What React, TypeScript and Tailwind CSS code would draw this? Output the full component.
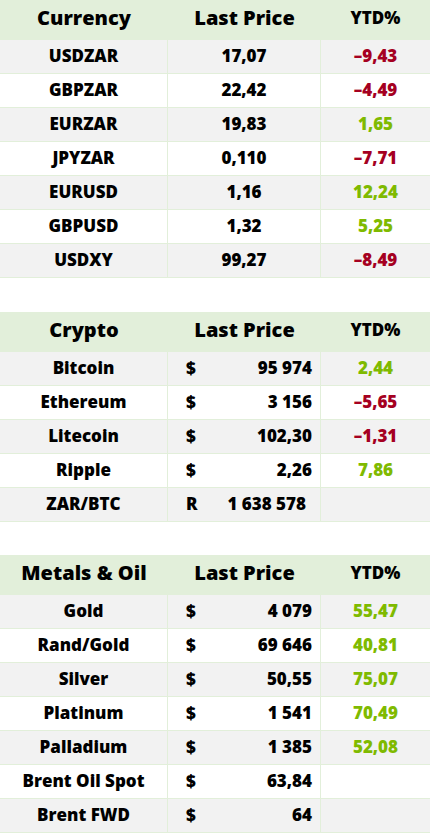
import * as React from 'react'

type Row = {
  name: string
  price: string
  cur?: string
  ytd?: string
  narrow?: boolean
}

const currency: Row[] = [
  { name: 'USDZAR', price: '17,07', ytd: '-9,43' },
  { name: 'GBPZAR', price: '22,42', ytd: '-4,49' },
  { name: 'EURZAR', price: '19,83', ytd: '1,65' },
  { name: 'JPYZAR', price: '0,110', ytd: '-7,71' },
  { name: 'EURUSD', price: '1,16', ytd: '12,24' },
  { name: 'GBPUSD', price: '1,32', ytd: '5,25' },
  { name: 'USDXY', price: '99,27', ytd: '-8,49' }
]

const crypto: Row[] = [
  { name: 'Bitcoin', cur: '$', price: '95 974', ytd: '2,44' },
  { name: 'Ethereum', cur: '$', price: '3 156', ytd: '-5,65' },
  { name: 'Litecoin', cur: '$', price: '102,30', ytd: '-1,31' },
  { name: 'Ripple', cur: '$', price: '2,26', ytd: '7,86' },
  { name: 'ZAR/BTC', cur: 'R', price: '1 638 578', narrow: true }
]

const metals: Row[] = [
  { name: 'Gold', cur: '$', price: '4 079', ytd: '55,47' },
  { name: 'Rand/Gold', cur: '$', price: '69 646', ytd: '40,81' },
  { name: 'Silver', cur: '$', price: '50,55', ytd: '75,07' },
  { name: 'Platinum', cur: '$', price: '1 541', ytd: '70,49' },
  { name: 'Palladium', cur: '$', price: '1 385', ytd: '52,08' },
  { name: 'Brent Oil Spot', cur: '$', price: '63,84' },
  { name: 'Brent FWD', cur: '$', price: '64' }
]

function Table(props: { title: string; rows: Row[] }) {
  const { title, rows } = props
  return (
    <div className="w-[430px]">
      <div className="grid grid-cols-[168px_153px_109px] h-10 bg-[#e2efda] items-center text-black pb-1">
        <div className="text-center text-[20px]">{title}</div>
        <div className="text-center text-[20px]">Last Price</div>
        <div className="text-center text-[17px]">YTD%</div>
      </div>
      {rows.map((r, i) => (
        <div
          key={r.name}
          className={`grid grid-cols-[168px_153px_109px] h-[34px] text-[17px] border-b border-[#e2efda] ${
            i % 2 === 0 ? 'bg-[#f2f2f2]' : 'bg-white'
          }`}
        >
          <div className="flex items-center justify-center border-r border-[#e2efda] pb-0.5">{r.name}</div>
          {r.cur ? (
            <div className="flex items-center justify-between border-r border-[#e2efda] pl-[18px] pr-[8px] pb-0.5">
              <span>{r.cur}</span>
              <span className={r.narrow ? 'pr-[6px]' : ''}>{r.price}</span>
            </div>
          ) : (
            <div className="flex items-center justify-center border-r border-[#e2efda] pb-0.5">{r.price}</div>
          )}
          <div
            className={`flex items-center justify-center pb-0.5 ${
              r.ytd && r.ytd.startsWith('-') ? 'text-[#a50021]' : 'text-[#7fba00]'
            }`}
          >
            {r.ytd ? r.ytd.replace('-', '\u2013') : ''}
          </div>
        </div>
      ))}
    </div>
  )
}

export default function App() {
  return (
    <div className="w-[431px] h-[835px] bg-white font-extrabold text-black font-['Open_Sans',sans-serif] flex flex-col">
      <Table title="Currency" rows={currency} />
      <div className="h-[34px]" />
      <Table title="Crypto" rows={crypto} />
      <div className="h-[33px]" />
      <Table title="Metals & Oil" rows={metals} />
    </div>
  )
}
